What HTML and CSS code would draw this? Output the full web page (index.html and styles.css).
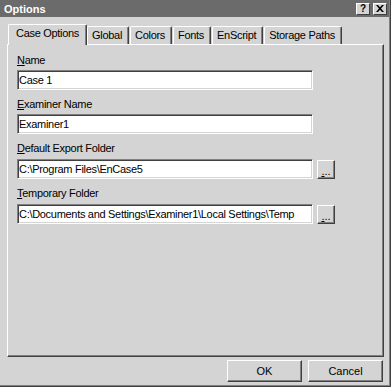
FILE: index.html
```html
<!DOCTYPE html>
<html lang="en">
<head>
    <meta charset="UTF-8">
    <title>Options</title>
    <link rel="stylesheet" href="styles.css">
</head>
<body>
    <div class="window">
        <div class="titlebar">
            <span class="title">Options</span>
            <div class="caption-buttons">
                <span class="caption-btn">?</span>
                <span class="caption-btn close">
                    <svg width="8" height="7" viewBox="0 0 8 7">
                        <path d="M0 0h2l2 2.2L6 0h2L5 3.5 8 7H6L4 4.8 2 7H0l3-3.5z" fill="#000"/>
                    </svg>
                </span>
            </div>
        </div>

        <div class="content">
            <div class="tabs">
                <div class="tab selected">Case Options</div>
                <div class="tab">Global</div>
                <div class="tab">Colors</div>
                <div class="tab">Fonts</div>
                <div class="tab">EnScript</div>
                <div class="tab">Storage Paths</div>
            </div>

            <div class="panel">
                <div class="field">
                    <label class="field-label"><u>N</u>ame</label>
                    <div class="field-row">
                        <input class="textbox" type="text" value="Case 1">
                    </div>
                </div>
                <div class="field">
                    <label class="field-label"><u>E</u>xaminer Name</label>
                    <div class="field-row">
                        <input class="textbox" type="text" value="Examiner1">
                    </div>
                </div>
                <div class="field">
                    <label class="field-label"><u>D</u>efault Export Folder</label>
                    <div class="field-row">
                        <input class="textbox" type="text" value="C:\Program Files\EnCase5">
                        <button class="browse"><u>.</u>..</button>
                    </div>
                </div>
                <div class="field">
                    <label class="field-label"><u>T</u>emporary Folder</label>
                    <div class="field-row">
                        <input class="textbox" type="text" value="C:\Documents and Settings\Examiner1\Local Settings\Temp">
                        <button class="browse"><u>.</u>..</button>
                    </div>
                </div>
            </div>

            <div class="footer">
                <button class="push">OK</button>
                <button class="push">Cancel</button>
            </div>
        </div>
    </div>
</body>
</html>
```

FILE: styles.css
```css
:root {
    --face: #d4d4d4;
    --shadow: #808080;
    --dark: #404040;
    --light: #ffffff;
    --caption: #6b6b6b;
}

body {
    margin: 0;
    font-family: 'Liberation Sans', Arial, sans-serif;
    font-size: 11px;
    letter-spacing: -0.3px;
    color: #000;
    background: var(--face);
}

.window {
    box-sizing: border-box;
    width: 391px;
    height: 387px;
    background: var(--face);
    border-right: 1px solid var(--dark);
    border-bottom: 1px solid var(--dark);
    box-shadow: inset -1px -1px 0 var(--shadow);
}

.titlebar {
    height: 17px;
    margin-right: 1px;
    background: var(--caption);
    display: flex;
    align-items: center;
    justify-content: space-between;
    padding-left: 4px;
}

.title {
    color: #fff;
    font-weight: bold;
    font-size: 11px;
    letter-spacing: 0;
}

.caption-buttons {
    display: flex;
    gap: 3px;
    margin-right: 2px;
}

.caption-btn {
    box-sizing: border-box;
    width: 14px;
    height: 12px;
    background: var(--face);
    border: 1px solid;
    border-color: var(--light) var(--dark) var(--dark) var(--light);
    font-weight: bold;
    font-size: 10px;
    line-height: 10px;
    letter-spacing: 0;
    text-align: center;
    display: flex;
    align-items: center;
    justify-content: center;
}

.content {
    padding: 0 6px 0 7px;
}

.tabs {
    display: flex;
    align-items: flex-end;
    height: 20px;
    margin-top: 7px;
    padding-left: 1px;
}

.tab {
    box-sizing: border-box;
    height: 18px;
    padding: 2px 6px 0 4px;
    line-height: 13px;
    border-top: 1px solid var(--light);
    border-left: 1px solid var(--light);
    border-right: 1px solid var(--dark);
    border-radius: 2px 2px 0 0;
    box-shadow: inset -1px 0 0 var(--shadow);
    margin-right: 1px;
}

.tab.selected {
    position: relative;
    height: 21px;
    margin-bottom: -1px;
    padding: 2px 7px 0 7px;
    background: var(--face);
    margin-right: 0;
}

.panel {
    box-sizing: border-box;
    height: 313px;
    border-top: 1px solid var(--light);
    border-left: 1px solid var(--light);
    border-right: 1px solid var(--dark);
    border-bottom: 1px solid var(--dark);
    box-shadow: inset -1px -1px 0 var(--shadow);
    padding: 9px 0 0 9px;
}

.field {
    margin-bottom: 8px;
}

.field-label {
    display: block;
    line-height: 13px;
    height: 13px;
    margin-bottom: 3px;
}

.field-row {
    display: flex;
    align-items: center;
    gap: 4px;
}

.textbox {
    box-sizing: border-box;
    width: 296px;
    height: 20px;
    margin: 0;
    padding: 0 0 0 1px;
    font-family: 'Liberation Sans', Arial, sans-serif;
    font-size: 11px;
    letter-spacing: -0.3px;
    color: #000;
    background: #fff;
    border: 1px solid;
    border-color: var(--shadow) var(--light) var(--light) var(--shadow);
    box-shadow: inset 1px 1px 0 var(--dark), inset -1px -1px 0 var(--face);
    outline: none;
}

.browse {
    box-sizing: border-box;
    width: 18px;
    height: 19px;
    margin: 2px 0 0;
    padding: 4px 0 0;
    font-family: 'Liberation Sans', Arial, sans-serif;
    font-size: 11px;
    line-height: 11px;
    letter-spacing: 0;
    background: var(--face);
    border: 1px solid;
    border-color: var(--light) var(--dark) var(--dark) var(--light);
    box-shadow: inset -1px -1px 0 var(--shadow);
}

.footer {
    display: flex;
    justify-content: flex-end;
    gap: 6px;
    margin-top: 3px;
    padding-right: 1px;
}

.push {
    box-sizing: border-box;
    width: 75px;
    height: 22px;
    padding: 0;
    font-family: 'Liberation Sans', Arial, sans-serif;
    font-size: 11px;
    background: var(--face);
    border: 1px solid;
    border-color: var(--light) var(--dark) var(--dark) var(--light);
    box-shadow: inset -1px -1px 0 var(--shadow);
}
```
